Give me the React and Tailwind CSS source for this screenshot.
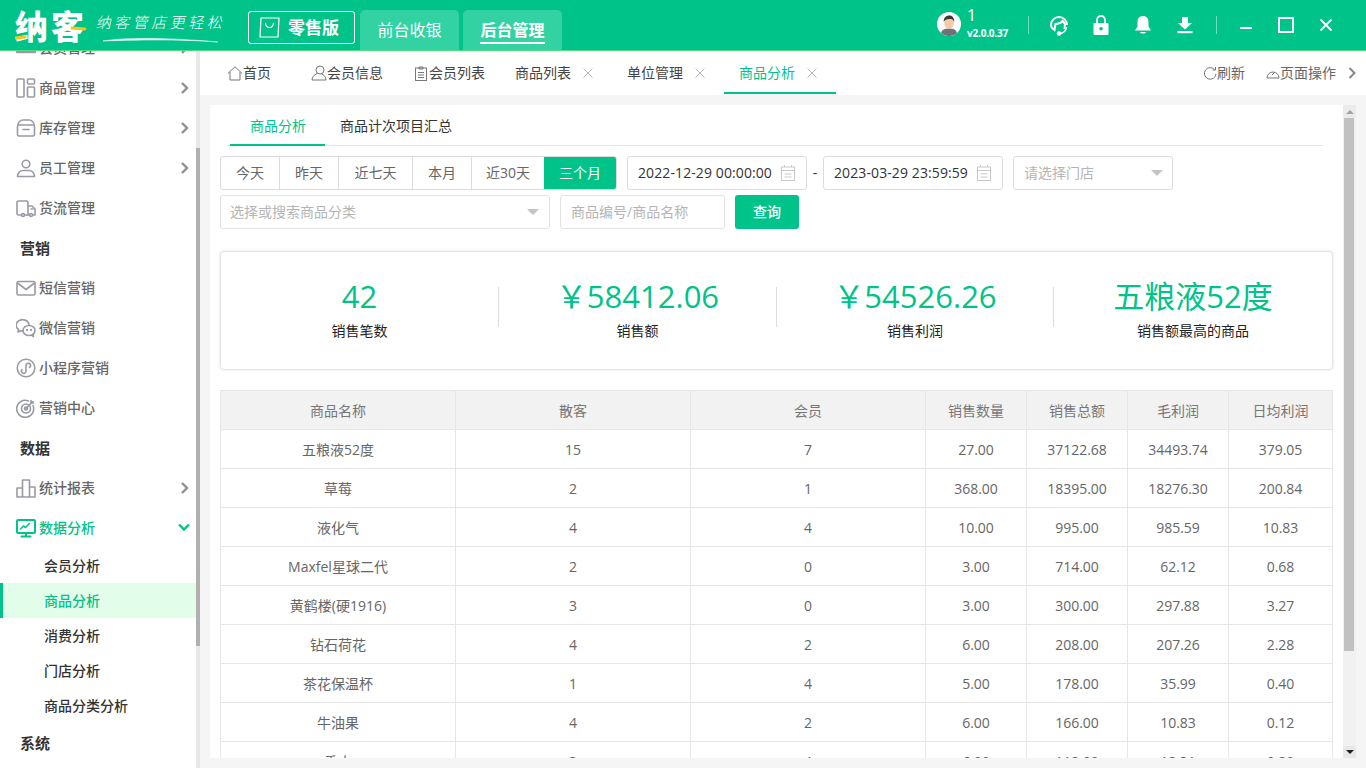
import React from "react";

const S = { fill: "none", stroke: "currentColor", strokeWidth: 1.6, strokeLinecap: "round", strokeLinejoin: "round" };
const Ico = ({ size = 20, vb = 20, className = "", children, ...r }) => (
  <svg width={size} height={size} viewBox={`0 0 ${vb} ${vb}`} className={"shrink-0 " + className} {...S} {...r}>{children}</svg>
);

const icons = {
  member: <><path d="M1 4h18M1 9h18M1 14h18" strokeWidth="2.4" /></>,
  goods: <><rect x="1" y="1" width="7" height="18" rx="1" /><rect x="11.500" y="1" width="7" height="5" rx="1" /><rect x="11.500" y="9" width="7" height="10" rx="1" /></>,
  stock: <><path d="M2 7a5 5 0 0 1 5-5h6a5 5 0 0 1 5 5" /><rect x="1.500" y="7" width="17" height="11" rx="1.500" /><path d="M7 11.500h6" /></>,
  staff: <><circle cx="10" cy="6" r="3.800" /><path d="M1.500 18.500c0-4 3-6 5.500-6h6c2.500 0 5.500 2 5.500 6z" /></>,
  truck: <><path d="M6 17H2.500A1.500 1.500 0 0 1 1 15.500v-11A1.500 1.500 0 0 1 2.500 3h8A1.500 1.500 0 0 1 12 4.500V17H9" /><path d="M12 8h4l3 3v6h-2M12 17h2" /><circle cx="7" cy="17" r="1.500" /><circle cx="15" cy="17" r="1.500" /><path d="M15 11h2" /></>,
  mail: <><rect x="1" y="3.500" width="18" height="13.500" rx="1.500" /><path d="M1.500 5l8.500 6.500L18.500 5" /></>,
  wechat: <><path d="M13 6.500a6.500 5.500 0 1 0-10.500 5L2 14l2.800-1.200c.8.200 1.400.3 2.200.3" /><ellipse cx="13" cy="12.500" rx="6" ry="5" /><path d="M15.500 17l2 1.500-.3-2.500" /><circle cx="11" cy="12" r=".4" /><circle cx="15" cy="12" r=".4" /></>,
  mini: <><circle cx="10" cy="10" r="8.800" /><path d="M6 11.500a2.300 2.300 0 1 0 4 1.500V7.500a2.300 2.300 0 1 1 3.500 2" /></>,
  target: <><path d="M17 7.500A8.500 8.500 0 1 1 12.500 3" /><circle cx="10" cy="10.500" r="4.500" /><circle cx="10" cy="10.500" r="1.500" /><path d="M10 10.500L17 3.500M15 2.500v2.500h2.500" /></>,
  chart: <><path d="M1 19h18V9h-5.500M1 19v-9h5.500V19M6.500 19V2h7v17" /></>,
  monitor: <><rect x="1" y="2" width="18" height="13" rx="1" strokeWidth="2" /><path d="M10 15v3M5.500 18.500h9" strokeWidth="2" /><path d="M4.500 11l3-3 2 1.500 4-4" strokeWidth="1.600" /></>,
};

const Chevron = ({ down }) => (
  <svg width={down ? 12 : 10} height="12" viewBox={down ? "0 0 12 12" : "0 0 10 12"} className={"shrink-0 " + (down ? "text-[#00c389]" : "text-[#8f8f98]")} fill="none" stroke="currentColor" strokeWidth="2.400">
    {down ? <path d="M1 2.500l5 5 5-5" /> : <path d="M2 1l5 5-5 5" />}
  </svg>
);

const SideItem = ({ icon, label, arrow, active, down }) => (
  <div className={"h-10 flex items-center pl-[16px] pr-[6px] text-sm font-medium " + (active ? "text-[#00c389]" : "text-[#666]")}>
    <Ico className={"mr-[3px] " + (active ? "text-[#00c389]" : "text-[#9a9aa6]")}>{icons[icon]}</Ico>
    <span className="flex-1">{label}</span>
    {arrow && <Chevron down={down} />}
  </div>
);
const SideHead = ({ label }) => (
  <div className="h-10 flex items-center pl-[20px] text-[15px] font-semibold text-[#333]">{label}</div>
);
const SubItem = ({ label, active }) => (
  <div className={"h-[35px] flex items-center text-sm font-medium " + (active ? "bg-[#e3fdeb] text-[#00c389] border-l-[3px] border-[#00c389] pl-[41px]" : "pl-[44px] text-[#333]")}>{label}</div>
);

const Sidebar = () => (
  <aside className="w-[200px] flex shrink-0 bg-white overflow-hidden">
    <nav className="w-[196px] -mt-[23px] overflow-hidden">
      <SideItem icon="member" label="会员管理" arrow />
      <SideItem icon="goods" label="商品管理" arrow />
      <SideItem icon="stock" label="库存管理" arrow />
      <SideItem icon="staff" label="员工管理" arrow />
      <SideItem icon="truck" label="货流管理" />
      <SideHead label="营销" />
      <SideItem icon="mail" label="短信营销" />
      <SideItem icon="wechat" label="微信营销" />
      <SideItem icon="mini" label="小程序营销" />
      <SideItem icon="target" label="营销中心" />
      <SideHead label="数据" />
      <SideItem icon="chart" label="统计报表" arrow />
      <SideItem icon="monitor" label="数据分析" arrow active down />
      <SubItem label="会员分析" />
      <SubItem label="商品分析" active />
      <SubItem label="消费分析" />
      <SubItem label="门店分析" />
      <SubItem label="商品分类分析" />
      <SideHead label="系统" />
    </nav>
    <div className="w-[4px] bg-[#e8e8e8]">
      <div className="mt-[97px] h-[498px] bg-[#b0b0b0]" />
    </div>
  </aside>
);

const Header = () => (
  <header className="h-[51px] shrink-0 flex items-stretch bg-[#00c389] border-b border-[#4fdc85] text-white">
    <div className="relative w-[248px] shrink-0 flex items-center pl-[15px]">
      <span className="text-[33px] leading-[34px] font-black tracking-[3px] mt-[3px]">纳客</span>
      <span className="ml-[10px] text-[15px] leading-[18px] tracking-[3.500px] -skew-x-12 font-light -mt-[7px]">纳客管店更轻松</span>
      <svg className="absolute left-[15px] top-[12px]" width="210" height="34" viewBox="0 0 210 34" fill="none">
        <path d="M1 26l9-1" stroke="#f5c518" strokeWidth="3" strokeLinecap="round" />
        <path d="M57 16l13 1" stroke="#f5c518" strokeWidth="3" strokeLinecap="round" />
        <path d="M88 29c25-4 70-3 115 1c-40-3-85-2-115-1z" fill="#fff" stroke="#fff" strokeWidth=".5" />
      </svg>
    </div>
    <div className="w-[107px] h-[33px] mt-[11px] shrink-0 flex items-center border border-white rounded-[3px] pl-[10px]">
      <svg width="21" height="21" viewBox="0 0 21 21" fill="none" stroke="#fff" strokeWidth="1.200" className="shrink-0">
        <path d="M2 1h18l-1 19H1z" /><path d="M6.500 6c.5 6 7.500 6 8 0" />
      </svg>
      <span className="ml-[8px] text-[17px] font-bold leading-none">零售版</span>
    </div>
    <div className="ml-[5px] w-[99px] mt-[10px] rounded-t-[5px] bg-[#33d2a2] flex items-center justify-center text-base">前台收银</div>
    <div className="ml-[4px] w-[99px] mt-[10px] rounded-t-[5px] bg-[#33d2a2] flex flex-col items-center justify-center text-base font-bold">
      <span className="border-b-2 border-white leading-[21px] pb-[1px] mt-[3px]">后台管理</span>
    </div>

    <div className="ml-auto flex items-center pr-[33px]">
      <svg width="24" height="24" viewBox="0 0 24 24" className="shrink-0 -mt-[2px]">
        <circle cx="12" cy="12" r="12" fill="#fff" />
        <path d="M4 21c1-4 5-4.500 8-4.500s7 .5 8 4.500a12 12 0 0 1-16 0z" fill="#6f7278" />
        <ellipse cx="12" cy="11" rx="4.800" ry="5.800" fill="#f6c9a8" />
        <path d="M6.800 10c-.5-5 3-6.500 5.500-6.500s5.200 1.800 4.900 6.500c-1-2.500-2-3-5-3s-4.200 .8-5.400 3z" fill="#3a3a3a" />
      </svg>
      <div className="ml-[6px] w-[61px] flex flex-col">
        <span className="text-base leading-[17px] h-[17px] -mt-[3px]">1</span>
        <span className="text-[10px] leading-[13px] mt-[3px] font-bold tracking-[-0.2px]">v2.0.0.37</span>
      </div>
      <div className="w-px h-[18px] bg-[#6fe0bd]" />
      <svg width="22" height="22" viewBox="0 0 22 22" fill="none" stroke="#fff" strokeWidth="2" className="ml-[19px] shrink-0">
        <path d="M3 11a8 8 0 0 1 16 0" /><path d="M3 11c0 3 2 4 3.500 5l1-6c2 0 6-1 7-3 1 1 2 2 2.500 3l-.5 5" />
        <path d="M18.500 13c0 3-2.500 6-6.500 6.500" strokeWidth="1.400" /><circle cx="11" cy="19.500" r="1.300" fill="#fff" />
      </svg>
      <svg width="16" height="20" viewBox="0 0 16 20" className="ml-[23px] shrink-0">
        <path d="M4 8V5a4 4 0 0 1 8 0v3" fill="none" stroke="#fff" strokeWidth="1.800" />
        <path fillRule="evenodd" d="M1.500 8h13a1 1 0 0 1 1 1v10a1 1 0 0 1-1 1h-13a1 1 0 0 1-1-1V9a1 1 0 0 1 1-1zM8 12a1.800 1.800 0 1 0 0 3.600A1.800 1.800 0 0 0 8 12z" fill="#fff" />
      </svg>
      <svg width="18" height="20" viewBox="0 0 18 20" className="ml-[25px] shrink-0" fill="#fff">
        <path d="M9 1c3.500 0 5.500 2.500 5.500 6v4.500L17 15.500H1l2.500-4V7C3.500 3.500 5.500 1 9 1z" /><path d="M6 17h6c-.5 2-5.500 2-6 0z" />
      </svg>
      <svg width="18" height="18" viewBox="0 0 18 18" className="ml-[24px] shrink-0" fill="#fff">
        <path d="M6 1h6v6h4L9 13.500 2 7h4z" /><rect x="1.500" y="15" width="15" height="2.200" />
      </svg>
      <div className="ml-[22px] w-px h-[18px] bg-[#6fe0bd]" />
      <div className="ml-[23px] w-[12px] h-[2px] bg-white mt-[6px]" />
      <div className="ml-[26px] w-[16px] h-[16px] border-2 border-white" />
      <svg width="14" height="14" viewBox="0 0 14 14" stroke="#fff" strokeWidth="1.800" className="ml-[25px] shrink-0"><path d="M1.500 1.500l11 11M12.500 1.500l-11 11" /></svg>
    </div>
  </header>
);

const Close = () => (
  <svg width="10" height="10" viewBox="0 0 10 10" stroke="#b8b8b8" strokeWidth="1" className="ml-[12px] shrink-0"><path d="M.5.5l9 9M9.500.5l-9 9" /></svg>
);
const tabIco = "shrink-0";

const TabBar = () => (
  <div className="h-[44px] shrink-0 bg-white flex items-stretch text-sm text-[#444]">
    <div className="ml-[27px] flex items-center">
      <svg width="16" height="15" viewBox="0 0 16 15" fill="none" stroke="#777" strokeWidth="1" className={tabIco}><path d="M.8 7.500L8 .8l7.200 6.700M3 6v8h10V6" /></svg>
      <span className="w-[28px]">首页</span>
    </div>
    <div className="ml-[40px] flex items-center">
      <svg width="16" height="16" viewBox="0 0 16 16" fill="none" stroke="#777" strokeWidth="1" className={tabIco}><circle cx="9" cy="5" r="4" /><path d="M6 8.500C3 10 1 12 1 15h14c0-3-2-5-5-6.500" /></svg>
      <span className="w-[56px]">会员信息</span>
    </div>
    <div className="ml-[31px] flex items-center">
      <svg width="15" height="15" viewBox="0 0 15 15" fill="none" stroke="#777" strokeWidth="1" className={tabIco}><rect x="1.500" y="2" width="11" height="12.500" /><path d="M5 1h4v2H5zM4 6.500h6M4 9h6M4 11.500h6" /></svg>
      <span className="w-[56px]">会员列表</span>
    </div>
    <div className="ml-[30px] flex items-center"><span>商品列表</span><Close /></div>
    <div className="ml-[34px] flex items-center"><span>单位管理</span><Close /></div>
    <div className="ml-[19px] w-[112px] pl-[15px] pt-[3px] mb-[1px] flex items-center text-[#00c389] border-b-2 border-[#00c389]"><span>商品分析</span><Close /></div>
    <div className="ml-auto flex items-center pr-[10px] text-[#666]">
      <svg width="14" height="14" viewBox="0 0 14 14" fill="none" stroke="#777" strokeWidth="1" className={tabIco}><path d="M11.500 3.500A5.800 5.800 0 1 0 13 8" /><path d="M12.500 1v3H9.500" /></svg>
      <span>刷新</span>
      <svg width="14" height="14" viewBox="0 0 14 14" fill="none" stroke="#777" strokeWidth="1" className="ml-[21px] shrink-0"><path d="M1 12a6 6 0 1 1 12 0zM6 9l3-3" /></svg>
      <span>页面操作</span>
      <svg width="8" height="12" viewBox="0 0 8 12" fill="none" stroke="#888" strokeWidth="2" className="ml-[12px] shrink-0"><path d="M1.500 1l5 5-5 5" /></svg>
    </div>
  </div>
);

const Cal = () => (
  <svg width="14" height="16" viewBox="0 0 14 16" fill="none" stroke="#c9c9c9" strokeWidth="1" className="shrink-0"><rect x=".5" y="2" width="13" height="13.500" /><path d="M.5 5.500h13M3.500 9h7M3.500 12h7M3.500 0v2M10.500 0v2" /></svg>
);
const Caret = () => <span className="w-0 h-0 border-x-[6px] border-x-transparent border-t-[6px] border-t-[#c4c4c4] shrink-0" />;

const ranges = [["今天", 59], ["昨天", 59], ["近七天", 74], ["本月", 59], ["近30天", 72], ["三个月", 72]];

const Filters = () => (
  <div className="px-[10px]">
    <div className="flex items-start">
      <div className="flex h-[34px] border border-[#dcdcdc] rounded-[3px] overflow-hidden text-sm text-[#666]">
        {ranges.map(([t, w], i) => (
          <div key={t} style={{ width: w }} className={"flex items-center justify-center " + (i === 5 ? "bg-[#00c389] text-white" : i === 4 ? "" : "border-r border-[#dcdcdc]")}>{t}</div>
        ))}
      </div>
      <div className="ml-[10px] w-[180px] h-[34px] border border-[#dcdcdc] rounded-[3px] flex items-center justify-between pl-[10px] pr-[11px] text-sm tracking-[0.1px] text-[#333]"><span>2022-12-29 00:00:00</span><Cal /></div>
      <span className="w-[16px] h-[34px] flex items-center justify-center text-sm text-[#333]">-</span>
      <div className="w-[180px] h-[34px] border border-[#dcdcdc] rounded-[3px] flex items-center justify-between pl-[10px] pr-[11px] text-sm tracking-[0.1px] text-[#333]"><span>2023-03-29 23:59:59</span><Cal /></div>
      <div className="ml-[10px] w-[160px] h-[34px] border border-[#dcdcdc] rounded-[3px] flex items-center justify-between pl-[10px] pr-[9px] text-sm text-[#b5b5b5]"><span>请选择门店</span><Caret /></div>
    </div>
    <div className="flex gap-[10px] mt-[5px]">
      <div className="w-[330px] h-[34px] border border-[#e2e2e2] rounded-[3px] flex items-center justify-between pl-[9px] pr-[10px] text-sm text-[#b5b5b5]"><span>选择或搜索商品分类</span><Caret /></div>
      <div className="w-[165px] h-[34px] border border-[#e2e2e2] rounded-[3px] flex items-center pl-[10px] text-sm text-[#b5b5b5]">商品编号/商品名称</div>
      <div className="w-[64px] h-[34px] rounded-[3px] bg-[#00c389] text-white flex items-center justify-center text-sm font-medium">查询</div>
    </div>
  </div>
);

const stats = [["42", "销售笔数", "w-[278px] border-r"], ["￥58412.06", "销售额", "w-[278px] border-r"], ["￥54526.26", "销售利润", "w-[277px] border-r"], ["五粮液52度", "销售额最高的商品", "flex-1"]];

const Summary = () => (
  <div className="mx-[10px] mt-[22px] h-[119px] w-[1113px] border border-[#e4e4e4] rounded-[4px] shadow-[0_0_3px_rgba(0,0,0,0.12)] flex items-start pt-[35px]">
    {stats.map(([v, l, c]) => (
      <div key={l} className={"h-[40px] flex flex-col items-center border-[#dedede] " + c}>
        <span className="text-[31px] leading-[42px] text-[#00c389] whitespace-nowrap -mt-[12px]">{v}</span>
        <span className="text-sm leading-[18px] text-[#222] mt-[5px] whitespace-nowrap">{l}</span>
      </div>
    ))}
  </div>
);

const rows = [
  ["五粮液52度", "15", "7", "27.00", "37122.68", "34493.74", "379.05"],
  ["草莓", "2", "1", "368.00", "18395.00", "18276.30", "200.84"],
  ["液化气", "4", "4", "10.00", "995.00", "985.59", "10.83"],
  ["Maxfel星球二代", "2", "0", "3.00", "714.00", "62.12", "0.68"],
  ["黄鹤楼(硬1916)", "3", "0", "3.00", "300.00", "297.88", "3.27"],
  ["钻石荷花", "4", "2", "6.00", "208.00", "207.26", "2.28"],
  ["茶花保温杯", "1", "4", "5.00", "178.00", "35.99", "0.40"],
  ["牛油果", "4", "2", "6.00", "166.00", "10.83", "0.12"],
  ["香水", "3", "4", "6.00", "112.00", "18.31", "0.20"],
];
const widths = [235, 235, 235, 101, 101, 101, 104];
const heads = ["商品名称", "散客", "会员", "销售数量", "销售总额", "毛利润", "日均利润"];

const DataTable = () => (
  <div className="mx-[10px] mt-[20px] w-[1113px]">
    <table className="table-fixed border-collapse w-[1112px] text-sm">
      <colgroup>{widths.map((w, i) => <col key={i} style={{ width: w }} />)}</colgroup>
      <thead>
        <tr className="bg-[#f2f2f2] text-[#777]">
          {heads.map((h) => <th key={h} className="h-[39px] p-0 pt-[2px] font-normal border border-[#e6e6e6]">{h}</th>)}
        </tr>
      </thead>
      <tbody>
        {rows.map((r) => (
          <tr key={r[0]} className="text-[#666]">
            {r.map((c, i) => <td key={i} className="h-[39px] p-0 pt-[2px] text-center border border-[#e6e6e6]">{c}</td>)}
          </tr>
        ))}
      </tbody>
    </table>
  </div>
);

const Content = () => (
  <div className="flex-1 min-h-0 flex p-[10px] bg-[#f5f5f5]">
    <div className="w-[1133px] bg-white overflow-hidden">
      <div className="ml-[17px] mr-[20px] h-[41px] border-b border-[#e6e6e6] flex items-stretch text-sm">
        <div className="ml-[3px] w-[95px] pl-[20px] pt-[2px] flex items-center text-[#00c389] border-b-2 border-[#00c389] -mb-px">商品分析</div>
        <div className="ml-[15px] pt-[2px] flex items-center text-[#333]">商品计次项目汇总</div>
      </div>
      <div className="mt-[10px]">
        <Filters />
        <Summary />
        <DataTable />
      </div>
    </div>
    <div className="w-[13px] bg-[#f1f1f1] flex flex-col items-start">
      <div className="h-[13px] w-[13px] bg-[#ebebeb] flex items-center justify-center"><span className="w-0 h-0 border-x-[4px] border-x-transparent border-b-[4px] border-b-[#a3a3a3]" /></div>
      <div className="w-[10px] ml-px h-[533px] bg-[#c1c1c1]" />
      <div className="mt-auto h-[12px] w-[13px] bg-[#e8e8e8] flex items-center justify-center"><span className="w-0 h-0 border-x-[4px] border-x-transparent border-t-[4px] border-t-[#222]" /></div>
    </div>
  </div>
);

export default function App() {
  return (
    <div className="w-[1366px] h-[768px] flex flex-col overflow-hidden bg-white font-['Open_Sans','Noto_Sans_CJK_SC',sans-serif]">
      <Header />
      <div className="flex-1 min-h-0 flex">
        <Sidebar />
        <main className="flex-1 min-w-0 flex flex-col">
          <TabBar />
          <Content />
        </main>
      </div>
    </div>
  );
}
